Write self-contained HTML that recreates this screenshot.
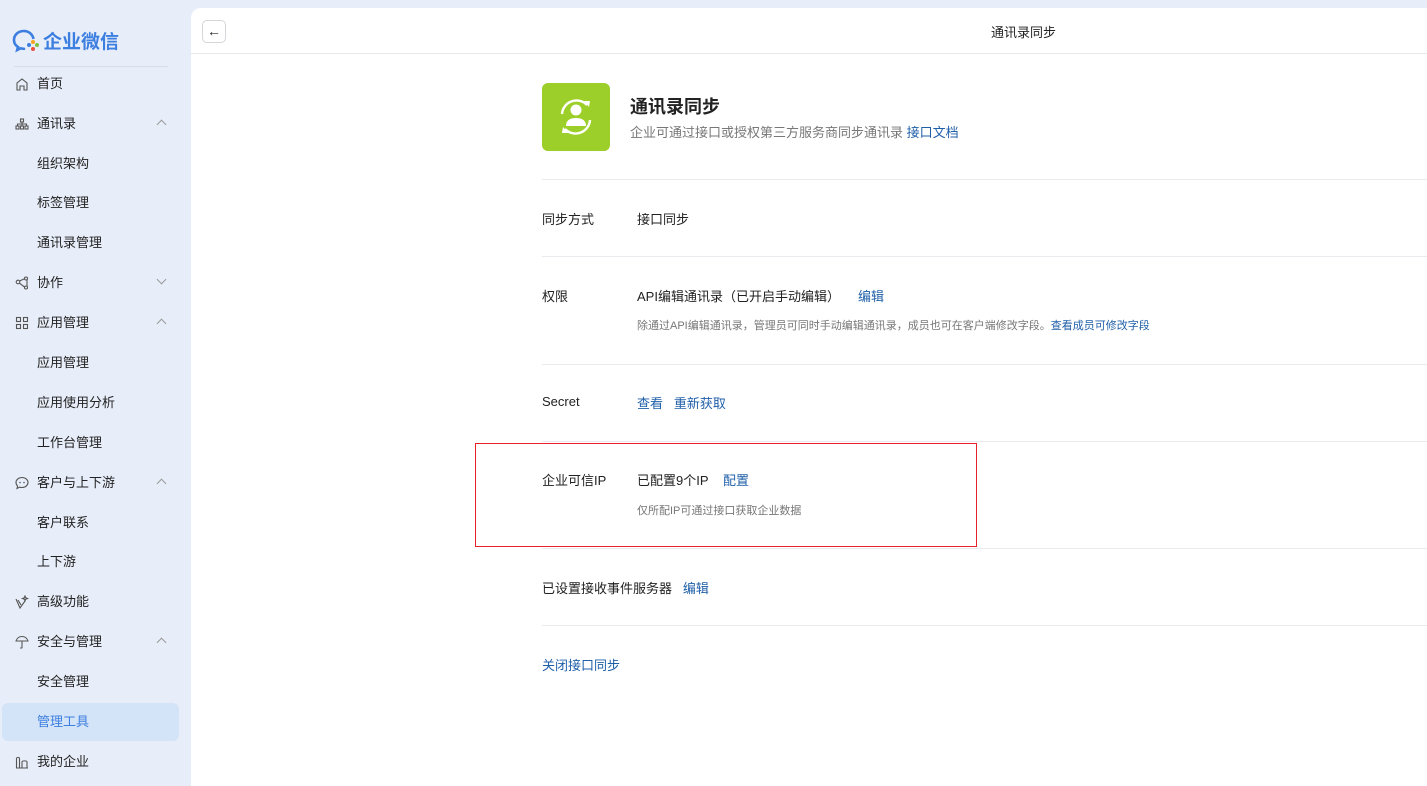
<!DOCTYPE html>
<html><head><meta charset="utf-8"><style>
*{margin:0;padding:0;box-sizing:border-box}
body{width:1427px;height:786px;background:#e8eef9;font-family:"Liberation Sans","Noto Sans CJK SC",sans-serif;font-size:13px;color:#222;position:relative;overflow:hidden}
.side{position:absolute;left:0;top:0;width:191px;height:786px}
.logo{position:absolute;left:12px;top:27px;font-size:19px;font-weight:bold;color:#3d7fe0;display:flex;align-items:center;gap:3px}
.sep{position:absolute;left:14px;top:66px;width:154px;height:1px;background:#d6dde8}
.nav{position:absolute;left:0;width:191px;height:38px;line-height:38px}
.nav .ic{position:absolute;left:15px;top:12px;width:14px;height:14px}
.nav .t{position:absolute;left:37px}
.nav .ch{position:absolute;left:158px;top:16px;width:7px;height:7px;border-left:1.2px solid #999;border-top:1.2px solid #999;transform:rotate(45deg)}
.nav .ch.d{transform:rotate(225deg);top:12px}
.act{position:absolute;left:2px;top:703px;width:177px;height:38px;background:#d3e3f8;border-radius:6px}
.main{position:absolute;left:191px;top:8px;width:1236px;height:778px;background:#fff;border-top-left-radius:10px}
.hdr{position:absolute;left:0;top:0;width:100%;height:46px;border-bottom:1px solid #e6e8ec}
.back{position:absolute;left:11px;top:12px;width:24px;height:23px;border:1px solid #d4d6da;border-radius:5px;font-size:14px;text-align:center;line-height:20px}
.ttl{position:absolute;left:800px;top:14px;font-size:13px}
.c{position:absolute}
.hr{position:absolute;left:351px;width:885px;height:1px;background:#e8eaed}
a{color:#1f5fa8;text-decoration:none}
.g{color:#777;font-size:11px}
</style></head><body>
<div class="side">
<div class="logo"><svg width="28" height="26" viewBox="0 0 28 26"><path d="M12 3C6 3 2 7 2 12c0 3 1.6 5.5 4 7l-.8 3 3.3-1.7c1.1.3 2.3.5 3.5.5" fill="none" stroke="#3d7fe0" stroke-width="2.6" stroke-linecap="round"/><path d="M21.5 11C20.5 6 16.5 3 12 3" fill="none" stroke="#3d7fe0" stroke-width="2.6"/><circle cx="21" cy="14" r="2" fill="#f5a623"/><circle cx="25" cy="17" r="2" fill="#7cc242"/><circle cx="21" cy="21" r="2" fill="#e8533f"/><circle cx="17" cy="17" r="2" fill="#3d7fe0"/></svg>企业微信</div>
<div class="sep"></div>
<div class="act"></div>
<div class="nav" style="top:65px"><svg class="ic" viewBox="0 0 14 14"><path d="M2 13V6l5-4 5 4v7H9V9H5v4z" fill="none" stroke="#555" stroke-width="1.1"/></svg><span class="t">首页</span></div>
<div class="nav" style="top:105px"><svg class="ic" viewBox="0 0 14 14"><g fill="none" stroke="#555" stroke-width="1.1"><rect x="5.5" y="2" width="3" height="3"/><rect x="1" y="9" width="3" height="3"/><rect x="5.5" y="9" width="3" height="3"/><rect x="10" y="9" width="3" height="3"/><path d="M7 5v4M2.5 9V7h9v2"/></g></svg><span class="t">通讯录</span><span class="ch"></span></div>
<div class="nav" style="top:145px"><span class="t">组织架构</span></div>
<div class="nav" style="top:184px"><span class="t">标签管理</span></div>
<div class="nav" style="top:224px"><span class="t">通讯录管理</span></div>
<div class="nav" style="top:264px"><svg class="ic" viewBox="0 0 14 14"><g fill="none" stroke="#555" stroke-width="1.1"><circle cx="3" cy="6" r="1.8"/><circle cx="11" cy="2.5" r="1.5"/><circle cx="11" cy="11.5" r="1.5"/><path d="M4.5 5L9.5 2.8M4.5 7.2l5 3.8M12 3.5v6.5"/></g></svg><span class="t">协作</span><span class="ch d"></span></div>
<div class="nav" style="top:304px"><svg class="ic" viewBox="0 0 14 14"><g fill="none" stroke="#555" stroke-width="1.1"><rect x="1.5" y="1.5" width="4" height="4"/><rect x="8.5" y="1.5" width="4" height="4"/><rect x="1.5" y="8.5" width="4" height="4"/><rect x="8.5" y="8.5" width="4" height="4"/></g></svg><span class="t">应用管理</span><span class="ch"></span></div>
<div class="nav" style="top:344px"><span class="t">应用管理</span></div>
<div class="nav" style="top:384px"><span class="t">应用使用分析</span></div>
<div class="nav" style="top:424px"><span class="t">工作台管理</span></div>
<div class="nav" style="top:464px"><svg class="ic" viewBox="0 0 14 14"><g fill="none" stroke="#555" stroke-width="1.1"><path d="M7 1.5c3.3 0 6 2.2 6 5s-2.7 5-6 5c-.8 0-1.6-.1-2.3-.4L2 12.5l.6-2.4C1.6 9.1 1 7.9 1 6.5c0-2.8 2.7-5 6-5z"/></g><circle cx="5" cy="6.5" r=".8" fill="#555"/><circle cx="9" cy="6.5" r=".8" fill="#555"/></svg><span class="t">客户与上下游</span><span class="ch"></span></div>
<div class="nav" style="top:504px"><span class="t">客户联系</span></div>
<div class="nav" style="top:543px"><span class="t">上下游</span></div>
<div class="nav" style="top:583px"><svg class="ic" viewBox="0 0 14 14"><g fill="none" stroke="#555" stroke-width="1.1"><path d="M1 4l4 9 5-7M3 5l3 5M10 1l.7 1.8L12.5 3.5l-1.8.7L10 6l-.7-1.8L7.5 3.5l1.8-.7z"/></g></svg><span class="t">高级功能</span></div>
<div class="nav" style="top:623px"><svg class="ic" viewBox="0 0 14 14"><g fill="none" stroke="#555" stroke-width="1.1"><path d="M1 6c1-3 3.5-4.5 6-4.5S12 3 13 6zM7 6v6.5c0 .8-1.5.8-1.5 0"/></g></svg><span class="t">安全与管理</span><span class="ch"></span></div>
<div class="nav" style="top:663px"><span class="t">安全管理</span></div>
<div class="nav" style="top:703px"><span class="t" style="color:#3d7fe0">管理工具</span></div>
<div class="nav" style="top:743px"><svg class="ic" viewBox="0 0 14 14"><g fill="none" stroke="#555" stroke-width="1.1"><path d="M1.5 13V3.5c0-1.5 3-1.5 3 0V13zM7 13V7c0-1.5 5-1.5 5 0v6zM1 13h12"/></g></svg><span class="t">我的企业</span></div>
</div>
<div class="main">
<div class="hdr"><div class="back">←</div><div class="ttl">通讯录同步</div></div>
<div class="c" style="left:351px;top:75px;width:68px;height:68px;background:#9ccf2a;border-radius:6px">
<svg width="68" height="68" viewBox="0 0 68 68"><g fill="none" stroke="#fff" stroke-width="2.4"><path d="M20 31a14.5 14.5 0 0 1 25-9"/><path d="M48 37a14.5 14.5 0 0 1-25 9"/></g><path d="M42 18l6 0-1 6z M26 50l-6 0 1-6z" fill="#fff"/><circle cx="34" cy="27" r="5.5" fill="#fff"/><path d="M24 43c0-6 4.5-8 10-8s10 2 10 8z" fill="#fff"/></svg></div>
<div class="c" style="left:439px;top:85px;font-size:18px;font-weight:bold">通讯录同步</div>
<div class="c" style="left:439px;top:114px;color:#777">企业可通过接口或授权第三方服务商同步通讯录 <a>接口文档</a></div>
<div class="hr" style="top:171px"></div>
<div class="c" style="left:351px;top:201px">同步方式</div><div class="c" style="left:446px;top:201px">接口同步</div>
<div class="hr" style="top:248px"></div>
<div class="c" style="left:351px;top:278px">权限</div><div class="c" style="left:446px;top:278px">API编辑通讯录（已开启手动编辑）&nbsp;&nbsp;&nbsp;&nbsp;&nbsp;<a>编辑</a></div>
<div class="c g" style="left:446px;top:309px">除通过API编辑通讯录，管理员可同时手动编辑通讯录，成员也可在客户端修改字段。<a>查看成员可修改字段</a></div>
<div class="hr" style="top:356px"></div>
<div class="c" style="left:351px;top:386px">Secret</div><div class="c" style="left:446px;top:385px"><a>查看</a>&nbsp;&nbsp;&nbsp;<a>重新获取</a></div>
<div class="hr" style="top:433px"></div>
<div class="c" style="left:284px;top:435px;width:502px;height:104px;border:1.5px solid #e8202a"></div>
<div class="c" style="left:351px;top:462px">企业可信IP</div><div class="c" style="left:446px;top:462px">已配置9个IP&nbsp;&nbsp;&nbsp;&nbsp;<a>配置</a></div>
<div class="c g" style="left:446px;top:494px">仅所配IP可通过接口获取企业数据</div>
<div class="hr" style="top:540px"></div>
<div class="c" style="left:351px;top:570px">已设置接收事件服务器&nbsp;&nbsp;&nbsp;<a>编辑</a></div>
<div class="hr" style="top:617px"></div>
<div class="c" style="left:351px;top:647px"><a>关闭接口同步</a></div>
</div>
</body></html>
